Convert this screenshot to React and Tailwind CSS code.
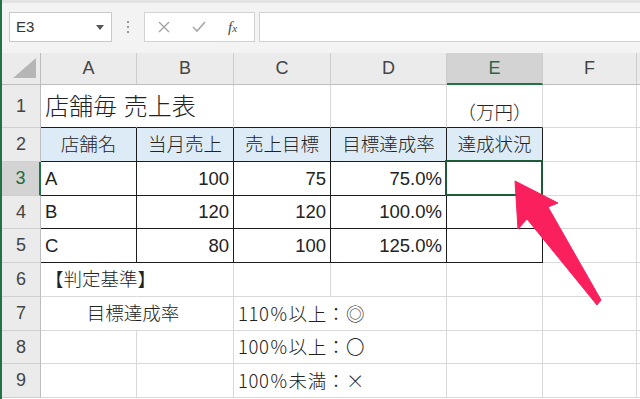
import React from "react";

// ── 小部品 ──────────────────────────────

const GRID = "border-r-[#d9d9d9]";
const GRIDB = "border-b-[#d9d9d9]";
const DARK = "border-r-[#1c1c1c]";
const DARKB = "border-b-[#1c1c1c]";

function Cell({ r = GRID, b = GRIDB, className = "", children }) {
  return (
    <div className={`flex items-center whitespace-nowrap border-r border-b px-[4px] text-[18.5px] text-[#222] font-light ${r} ${b} ${className}`}>
      {children}
    </div>
  );
}

function RowHead({ n, active }) {
  return (
    <div
      className={`flex items-center justify-center border-b border-b-[#cfcfcf] text-[18px] ${
        active
          ? "bg-[#d3d3d3] border-r-2 border-r-[#217346] text-[#1f6b3f]"
          : "bg-[#ebebeb] border-r border-r-[#bdbdbd] text-[#444]"
      }`}
    >
      {n}
    </div>
  );
}

function ColHead({ label, active }) {
  return (
    <div
      className={`flex items-center justify-center border-r border-r-[#cdcdcd] text-[18px] ${
        active
          ? "bg-[#d3d3d3] border-b-2 border-b-[#217346] text-[#2d6444]"
          : "bg-[#ebebeb] border-b border-b-[#bdbdbd] text-[#444]"
      }`}
    >
      {label}
    </div>
  );
}

function Toolbar() {
  return (
    <div className="h-[53px] bg-[#f3f3f3] border-t-[3px] border-t-[#e2e2e2]">
      <div className="flex items-center pt-[9px] h-[39px]">
        {/* 名前ボックス */}
        <div className="ml-[7px] w-[103px] h-[30px] bg-white border border-[#c9c9c9] flex items-center justify-between pl-[6px] pr-[7px]">
          <span className="text-[15px] text-[#333]">E3</span>
          <svg width="8" height="5" viewBox="0 0 8 5"><path d="M0 0h8L4 5z" fill="#555" /></svg>
        </div>
        <div className="w-[32px] flex flex-col items-center gap-[3px]">
          <span className="w-[2px] h-[2px] bg-[#9a9a9a]" />
          <span className="w-[2px] h-[2px] bg-[#9a9a9a]" />
          <span className="w-[2px] h-[2px] bg-[#9a9a9a]" />
        </div>
        {/* 数式ボタン */}
        <div className="w-[111px] h-[30px] bg-white border border-[#d2d2d2] flex items-center pl-[13px] gap-[22px]">
          <svg width="12" height="12" viewBox="0 0 12 12"><path d="M1 1l10 10M11 1L1 11" stroke="#a3a3a3" strokeWidth="1.4" /></svg>
          <svg width="14" height="12" viewBox="0 0 14 12"><path d="M1 6l4 4 8-9" stroke="#a8a8a8" strokeWidth="1.6" fill="none" /></svg>
          <span className="font-['Liberation_Serif',serif] italic text-[15px] text-[#444] leading-none">
            f<span className="text-[11px]">x</span>
          </span>
        </div>
        <div className="ml-[4px] flex-1 h-[30px] bg-white border border-[#d2d2d2] border-r-0" />
      </div>
    </div>
  );
}

// ── ページ ─────────────────────────────────

export default function App() {
  return (
    <div className="relative w-[640px] h-[399px] overflow-hidden bg-white border-l-2 border-l-[#217346] font-['Liberation_Sans','Noto_Sans_CJK_JP',sans-serif]">
      <Toolbar />

      <div className="grid grid-cols-[39px_96px_97px_97px_116px_96px_94px_1fr] grid-rows-[32px_43px_34px_34px_33px_34px_34px_34px_33px_34px]">
        {/* 列見出し */}
        <div className="bg-[#ebebeb] border-r border-r-[#bdbdbd] border-b border-b-[#bdbdbd] flex items-end justify-end pr-[4px] pb-[6px]">
          <svg width="23" height="20" viewBox="0 0 23 20"><path d="M23 0V20H0z" fill="#b6b6b6" /></svg>
        </div>
        <ColHead label="A" />
        <ColHead label="B" />
        <ColHead label="C" />
        <ColHead label="D" />
        <ColHead label="E" active />
        <ColHead label="F" />
        <ColHead label="" />

        {/* 1 */}
        <RowHead n="1" />
        <Cell r="border-r-transparent" b={DARKB} className="items-end pb-[8px]">
          <span className="text-[24px] leading-none">店舗毎 売上表</span>
        </Cell>
        <Cell b={DARKB} />
        <Cell b={DARKB} />
        <Cell b={DARKB} />
        <Cell b={DARKB} className="items-end justify-center pb-[5px]">
          <span className="leading-none">（万円）</span>
        </Cell>
        <Cell />
        <Cell />

        {/* 2 */}
        <RowHead n="2" />
        <Cell r={DARK} b={DARKB} className="justify-center bg-[#ddebf7]">店舗名</Cell>
        <Cell r={DARK} b={DARKB} className="justify-center bg-[#ddebf7]">当月売上</Cell>
        <Cell r={DARK} b={DARKB} className="justify-center bg-[#ddebf7]">売上目標</Cell>
        <Cell r={DARK} b={DARKB} className="justify-center bg-[#ddebf7]">目標達成率</Cell>
        <Cell r={DARK} b={DARKB} className="justify-center bg-[#ddebf7]">達成状況</Cell>
        <Cell />
        <Cell />

        {/* 3 */}
        <RowHead n="3" active />
        <Cell r={DARK} b={DARKB}>A</Cell>
        <Cell r={DARK} b={DARKB} className="justify-end">100</Cell>
        <Cell r={DARK} b={DARKB} className="justify-end">75</Cell>
        <Cell r={DARK} b={DARKB} className="justify-end">75.0%</Cell>
        <Cell r={DARK} b={DARKB} className="relative">
          <div className="absolute -left-[2px] -top-[2px] -right-[1px] -bottom-[1px] border-2 border-[#1d5a36]" />
        </Cell>
        <Cell />
        <Cell />

        {/* 4 */}
        <RowHead n="4" />
        <Cell r={DARK} b={DARKB}>B</Cell>
        <Cell r={DARK} b={DARKB} className="justify-end">120</Cell>
        <Cell r={DARK} b={DARKB} className="justify-end">120</Cell>
        <Cell r={DARK} b={DARKB} className="justify-end">100.0%</Cell>
        <Cell r={DARK} b={DARKB} />
        <Cell />
        <Cell />

        {/* 5 */}
        <RowHead n="5" />
        <Cell r={DARK} b={DARKB}>C</Cell>
        <Cell r={DARK} b={DARKB} className="justify-end">80</Cell>
        <Cell r={DARK} b={DARKB} className="justify-end">100</Cell>
        <Cell r={DARK} b={DARKB} className="justify-end">125.0%</Cell>
        <Cell r={DARK} b={DARKB} />
        <Cell />
        <Cell />

        {/* 6 */}
        <RowHead n="6" />
        <Cell r="border-r-transparent">【判定基準】</Cell>
        <Cell />
        <Cell />
        <Cell />
        <Cell />
        <Cell />
        <Cell />

        {/* 7 */}
        <RowHead n="7" />
        <Cell className="col-span-2 justify-center pr-[12px]">目標達成率</Cell>
        <Cell r="border-r-transparent" className="font-['Noto_Sans_CJK_JP',sans-serif] tracking-[0.6px]">110％以上：◎</Cell>
        <Cell />
        <Cell />
        <Cell />
        <Cell />

        {/* 8 */}
        <RowHead n="8" />
        <Cell />
        <Cell />
        <Cell r="border-r-transparent" className="font-['Noto_Sans_CJK_JP',sans-serif] tracking-[0.6px]">100％以上：〇</Cell>
        <Cell />
        <Cell />
        <Cell />
        <Cell />

        {/* 9 */}
        <RowHead n="9" />
        <Cell />
        <Cell />
        <Cell r="border-r-transparent" className="font-['Noto_Sans_CJK_JP',sans-serif] tracking-[0.6px]">100％未満：×</Cell>
        <Cell />
        <Cell />
        <Cell />
        <Cell />
      </div>

      {/* 矢印 */}
      <svg className="absolute left-[-2px] top-0 pointer-events-none" width="640" height="399" viewBox="0 0 640 399">
        <polygon
          points="515,181 558,203 548,207 601,300 597,305 527,219 518,229"
          fill="#fa1f5d"
          stroke="#fa1f5d"
          strokeWidth="1"
          strokeLinejoin="round"
        />
      </svg>
    </div>
  );
}
